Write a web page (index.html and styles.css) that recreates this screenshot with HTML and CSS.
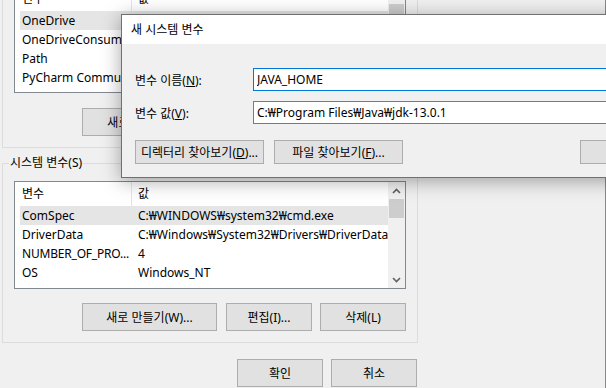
FILE: index.html
```html
<!DOCTYPE html>
<html lang="ko">
<head>
    <meta charset="UTF-8">
    <meta name="viewport" content="width=device-width, initial-scale=1.0">
    <title>환경 변수</title>
    <link rel="stylesheet" href="styles.css">
</head>
<body>
    <div class="env-window">
        <div class="group user-group">
            <div class="list user-list">
                <div class="list-body">
                    <div class="list-head">
                        <span class="col-name">변수</span>
                        <span class="col-value">값</span>
                    </div>
                    <div class="row selected">
                        <span class="col-name">OneDrive</span>
                        <span class="col-value">C:₩Users₩user₩OneDrive</span>
                    </div>
                    <div class="row">
                        <span class="col-name">OneDriveConsumer</span>
                        <span class="col-value">C:₩Users₩user₩OneDrive</span>
                    </div>
                    <div class="row">
                        <span class="col-name">Path</span>
                        <span class="col-value">C:₩Users₩user₩AppData₩Local₩Microsoft₩WindowsApps;</span>
                    </div>
                    <div class="row">
                        <span class="col-name">PyCharm Community Edition</span>
                        <span class="col-value">C:₩Program Files₩JetBrains₩PyCharm Community Edition₩bin;</span>
                    </div>
                </div>
                <div class="scrollbar">
                    <div class="scroll-btn">
                        <svg width="9" height="6" viewBox="0 0 9 6"><polyline points="1,5 4.5,1.5 8,5" /></svg>
                    </div>
                    <div class="thumb user-thumb"></div>
                    <div class="track"></div>
                    <div class="scroll-btn">
                        <svg width="9" height="6" viewBox="0 0 9 6"><polyline points="1,1 4.5,4.5 8,1" /></svg>
                    </div>
                </div>
            </div>
            <div class="btn-row">
                <button class="btn btn-wide">새로 만들기(N)...</button>
                <button class="btn">편집(E)...</button>
                <button class="btn btn-last">삭제(D)</button>
            </div>
        </div>

        <fieldset class="group sys-group">
            <legend>시스템 변수(S)</legend>
            <div class="list sys-list">
                <div class="list-body">
                    <div class="list-head">
                        <span class="col-name">변수</span>
                        <span class="col-value">값</span>
                    </div>
                    <div class="row selected">
                        <span class="col-name">ComSpec</span>
                        <span class="col-value">C:₩WINDOWS₩system32₩cmd.exe</span>
                    </div>
                    <div class="row">
                        <span class="col-name">DriverData</span>
                        <span class="col-value">C:₩Windows₩System32₩Drivers₩DriverData</span>
                    </div>
                    <div class="row">
                        <span class="col-name col-cut">NUMBER_OF_PRO...</span>
                        <span class="col-value">4</span>
                    </div>
                    <div class="row">
                        <span class="col-name">OS</span>
                        <span class="col-value">Windows_NT</span>
                    </div>
                </div>
                <div class="scrollbar">
                    <div class="scroll-btn">
                        <svg width="9" height="6" viewBox="0 0 9 6"><polyline points="1,5 4.5,1.5 8,5" /></svg>
                    </div>
                    <div class="thumb"></div>
                    <div class="track"></div>
                    <div class="scroll-btn">
                        <svg width="9" height="6" viewBox="0 0 9 6"><polyline points="1,1 4.5,4.5 8,1" /></svg>
                    </div>
                </div>
            </div>
            <div class="btn-row">
                <button class="btn btn-wide">새로 만들기(W)...</button>
                <button class="btn">편집(I)...</button>
                <button class="btn btn-last">삭제(L)</button>
            </div>
        </fieldset>

        <div class="footer">
            <button class="btn">확인</button>
            <button class="btn btn-last">취소</button>
        </div>
    </div>

    <div class="dialog">
        <div class="dialog-title">새 시스템 변수</div>
        <div class="dialog-body">
            <div class="field">
                <label for="varName">변수 이름(<u>N</u>):</label>
                <input type="text" id="varName" class="input focused" value="JAVA_HOME">
            </div>
            <div class="field">
                <label for="varValue">변수 값(<u>V</u>):</label>
                <input type="text" id="varValue" class="input" value="C:₩Program Files₩Java₩jdk-13.0.1">
            </div>
            <div class="dialog-buttons">
                <button class="btn btn-browse">디렉터리 찾아보기(<u>D</u>)...</button>
                <button class="btn btn-browse">파일 찾아보기(<u>F</u>)...</button>
                <span class="spacer"></span>
                <button class="btn">확인</button>
                <button class="btn">취소</button>
            </div>
        </div>
    </div>
</body>
</html>
```

FILE: styles.css
```css
* {
    box-sizing: border-box;
}
html, body {
    margin: 0;
    padding: 0;
}
body {
    position: relative;
    width: 606px;
    height: 388px;
    overflow: hidden;
    background-color: #f0f0f0;
    font-family: "Noto Sans", "Noto Sans CJK KR", sans-serif;
    font-size: 12px;
    color: #000;
}
.env-window {
    display: flex;
    flex-direction: column;
    width: 606px;
    height: 388px;
    border-right: 1px solid #8a8a8a;
}
.group {
    width: 416px;
    margin: 0 0 0 2px;
    border: 1px solid #dcdcdc;
    padding: 0 11px 11px;
}
.user-group {
    margin-top: -14px;
    border-top: none;
}
.sys-group {
    margin-top: 7px;
    min-width: 0;
}
.sys-group legend {
    margin-left: -5px;
    padding: 0 1px;
    line-height: 16px;
    height: 16px;
}
.list {
    display: flex;
    background: #fff;
    border: 1px solid #828790;
}
.list-body {
    flex: 1;
    min-width: 0;
    overflow: hidden;
}
.user-list .list-body {
    height: 105px;
}
.sys-list {
    margin-top: 10px;
}
.sys-list .list-body {
    height: 106px;
}
.list-head,
.row {
    display: flex;
    margin-left: 5px;
    white-space: nowrap;
}
.list-head {
    height: 24px;
    line-height: 24px;
}
.row {
    height: 19px;
    line-height: 19px;
}
.row.selected {
    background: #e5e5e5;
}
.col-name {
    width: 112px;
    flex-shrink: 0;
    padding-left: 2px;
    overflow: hidden;
    text-overflow: ellipsis;
}
.col-cut {
    overflow: visible;
    letter-spacing: -0.2px;
}
.list-head .col-name {
    border-right: 1px solid #e5e5e5;
}
.col-value {
    flex: 1;
    min-width: 0;
    padding-left: 6px;
    overflow: hidden;
}
.scrollbar {
    width: 17px;
    display: flex;
    flex-direction: column;
    background: #f0f0f0;
}
.scroll-btn {
    height: 17px;
    display: flex;
    align-items: center;
    justify-content: center;
}
.scroll-btn svg polyline {
    fill: none;
    stroke: #606060;
    stroke-width: 1.6;
}
.thumb {
    height: 19px;
    margin: 0 1px;
    background: #cdcdcd;
}
.user-thumb {
    height: 40px;
}
.track {
    flex: 1;
}
.btn-row {
    display: flex;
    justify-content: flex-end;
    gap: 9px;
    margin-top: 14px;
}
.user-group .btn-row {
    margin-top: 15px;
}
.btn {
    width: 86px;
    height: 28px;
    padding: 0;
    background: #e1e1e1;
    border: 1px solid #adadad;
    font-family: inherit;
    font-size: 12px;
    color: #000;
}
.btn-wide {
    width: 135px;
}
.btn-last {
    margin-left: -1px;
}
.footer {
    display: flex;
    justify-content: flex-end;
    gap: 9px;
    width: 417px;
    margin-top: 16px;
}

/* new variable dialog on top */
.dialog {
    position: absolute;
    left: 121px;
    top: 14px;
    width: 655px;
    border: 1px solid #707070;
    background: #f0f0f0;
    box-shadow: 0 3px 18px rgba(0, 0, 0, 0.35);
}
.dialog-title {
    height: 29px;
    line-height: 29px;
    padding-left: 9px;
    background: #fff;
}
.dialog-body {
    padding: 24px 13px 13px;
}
.field {
    display: flex;
    align-items: center;
}
.field + .field {
    margin-top: 10px;
}
.field label {
    width: 118px;
    flex-shrink: 0;
}
.input {
    flex: 1;
    height: 23px;
    padding: 0 3px;
    border: 1px solid #7a7a7a;
    background: #fff;
    font-family: inherit;
    font-size: 12px;
    color: #000;
    outline: none;
}
.input.focused {
    border-color: #0078d7;
}
.dialog-buttons {
    display: flex;
    gap: 10px;
    margin-top: 16px;
}
.dialog-buttons .btn {
    height: 24px;
}
.btn-browse {
    width: 129px;
}
.spacer {
    flex: 1;
}
```
